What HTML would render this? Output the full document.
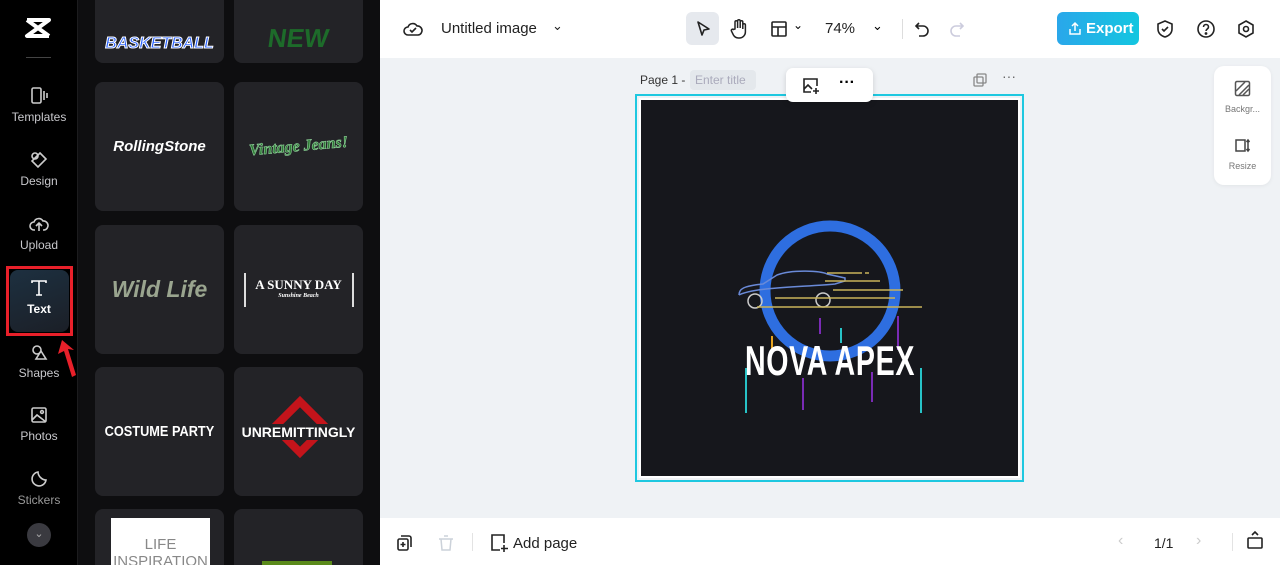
<!DOCTYPE html>
<html><head><meta charset="utf-8"><style>
*{margin:0;padding:0;box-sizing:border-box}
html,body{width:1280px;height:565px;overflow:hidden}
body{font-family:"Liberation Sans",sans-serif;background:#fff;position:relative}
.a{position:absolute}
.nav{left:0;top:0;width:78px;height:565px;background:#000;border-right:1px solid #1c1c1e}
.ni{position:absolute;left:0;width:78px;text-align:center;color:#c8c8cc;font-size:12px}
.ni svg{display:block;margin:0 auto 4px}
.panel{left:78px;top:0;width:302px;height:565px;background:#0e0e10;overflow:hidden}
.card{position:absolute;width:129px;height:129px;background:#232327;border-radius:8px;display:flex;align-items:center;justify-content:center;color:#fff;overflow:hidden}
.top{left:380px;top:0;width:900px;height:58px;background:#fff}
.bot{left:380px;top:518px;width:900px;height:47px;background:#fff}
.stage{left:380px;top:58px;width:900px;height:460px;background:#eff2f5;overflow:hidden}
</style></head><body>
<div class="a nav">
 <svg class="a" style="left:24px;top:16px" width="28" height="24" viewBox="0 0 28 24"><path d="M3 4h22L3 20h22M3 4l22 16" stroke="#fff" stroke-width="4" fill="none" stroke-linejoin="round"/></svg>
 <div class="a" style="left:26px;top:57px;width:25px;height:1px;background:#444"></div>
 <div class="ni" style="top:86px"><svg width="20" height="20" viewBox="0 0 20 20" fill="none" stroke="#ccc" stroke-width="1.6"><rect x="3" y="2" width="9" height="15" rx="1.5"/><path d="M15 5v9M18 7v5"/></svg>Templates</div>
 <div class="ni" style="top:150px"><svg width="20" height="20" viewBox="0 0 20 20" fill="none" stroke="#ccc" stroke-width="1.6"><circle cx="6" cy="6" r="3"/><path d="M11 3l6 6-8 8-6-6z"/></svg>Design</div>
 <div class="ni" style="top:214px"><svg width="20" height="20" viewBox="0 0 20 20" fill="none" stroke="#ccc" stroke-width="1.6"><path d="M6 16H5a4 4 0 010-8 5 5 0 019-1 4 4 0 011 9h-1M10 17v-7M7 12l3-3 3 3"/></svg>Upload</div>
 <div class="a" style="left:6px;top:266px;width:67px;height:70px;border:3px solid #e8202a"></div>
 <div class="a" style="left:10px;top:270px;width:59px;height:62px;border-radius:8px;background:linear-gradient(160deg,#1d3040,#1b1f27)"></div>
 <div class="ni" style="top:278px;color:#fff;font-weight:bold"><svg width="20" height="20" viewBox="0 0 20 20" fill="none" stroke="#fff" stroke-width="1.6"><path d="M3 5V3h14v2M10 3v14M7 17h6"/></svg>Text</div>
 <svg class="a" style="left:56px;top:338px" width="22" height="42" viewBox="0 0 22 42"><path d="M6 2l-4 14 6-3 8 26 4-2-8-26 6 1z" fill="#e8202a"/></svg>
 <div class="ni" style="top:342px"><svg width="20" height="20" viewBox="0 0 20 20" fill="none" stroke="#ccc" stroke-width="1.6"><circle cx="8" cy="8" r="4"/><path d="M12 9l5 8H7z"/></svg>Shapes</div>
 <div class="ni" style="top:405px"><svg width="20" height="20" viewBox="0 0 20 20" fill="none" stroke="#ccc" stroke-width="1.6"><rect x="3" y="3" width="14" height="14" rx="1.5"/><path d="M3 15l5-5 9 7"/><circle cx="13" cy="7" r="1.4"/></svg>Photos</div>
 <div class="ni" style="top:469px;color:#999"><svg width="20" height="20" viewBox="0 0 20 20" fill="none" stroke="#ccc" stroke-width="1.6"><path d="M17 11a7 7 0 11-8-8c0 4 4 8 8 8z"/></svg>Stickers</div>
 <div class="a" style="left:27px;top:523px;width:24px;height:24px;border-radius:50%;background:#3a3a40;color:#aaa;font-size:11px;text-align:center;line-height:22px">⌄</div>
</div>
<div class="a panel">
 <div class="card" style="left:17px;top:0;height:63px;border-radius:0 0 8px 8px"><div style="margin-top:24px;color:#2a63ff;font:italic bold 16px 'Liberation Sans';-webkit-text-stroke:1px #fff">BASKETBALL</div></div>
 <div class="card" style="left:156px;top:0;height:63px;border-radius:0 0 8px 8px"><div style="margin-top:14px;color:#1d6b2a;font:bold 26px 'Liberation Sans';transform:skewX(-8deg)">NEW</div></div>
 <div class="card" style="left:17px;top:82px"><span style="font:italic bold 15px 'Liberation Sans'">RollingStone</span></div>
 <div class="card" style="left:156px;top:82px"><span style="font:italic bold 16px 'Liberation Serif';color:#2f7a36;-webkit-text-stroke:0.6px #8fd09a;transform:rotate(-5deg)">Vintage Jeans!</span></div>
 <div class="card" style="left:17px;top:225px"><span style="font:italic bold 23px 'Liberation Sans';color:#9aa58f">Wild Life</span></div>
 <div class="card" style="left:156px;top:225px"><div style="width:110px;height:34px;border:2px solid #ddd;border-top:none;border-bottom:none;text-align:center;font:bold 13px 'Liberation Serif';padding-top:4px">A SUNNY DAY<div style="font-size:6px;font-style:italic">Sunshine Beach</div></div></div>
 <div class="card" style="left:17px;top:367px"><span style="font:bold 15px 'Liberation Sans Narrow','Liberation Sans';transform:scaleX(.85)">COSTUME PARTY</span></div>
 <div class="card" style="left:156px;top:367px"><div style="position:absolute;left:44px;top:38px;width:44px;height:44px;border:8px solid #c4141b;transform:rotate(45deg)"></div><span style="position:relative;font:bold 14px 'Liberation Sans';background:#232327">UNREMITTINGLY</span></div>
 <div class="card" style="left:17px;top:509px;height:56px;border-radius:8px 8px 0 0"><div style="position:absolute;left:16px;top:9px;width:99px;height:47px;background:#fff;color:#888;text-align:center;font-size:15px;padding-top:18px;overflow:hidden;line-height:17px">LIFE<br>INSPIRATION</div></div>
 <div class="card" style="left:156px;top:509px;height:56px;border-radius:8px 8px 0 0"><div style="position:absolute;left:28px;top:52px;width:70px;height:4px;background:#5a8a1a"></div></div>
 <div class="a" style="left:302px;top:258px;width:7px;height:52px;background:#2a2a2e;border-radius:0 6px 6px 0"></div>
</div>
<div class="a top">
 <svg class="a" style="left:23px;top:19px" width="20" height="20" viewBox="0 0 20 20" fill="none" stroke="#222" stroke-width="1.6"><path d="M6 16H5a4 4 0 010-8 5 5 0 019-1 4 4 0 011 9z"/><path d="M7 11l2 2 4-4"/></svg>
 <div class="a" style="left:61px;top:20px;font-size:15px;color:#222">Untitled image</div>
 <div class="a" style="left:172px;top:18px;font-size:13px;color:#222">⌄</div>
 <div class="a" style="left:306px;top:12px;width:33px;height:33px;background:#e6e9ee;border-radius:6px"></div>
 <svg class="a" style="left:314px;top:19px" width="18" height="20" viewBox="0 0 18 20"><path d="M4 3l11 7-5 1-2 5z" fill="none" stroke="#222" stroke-width="1.6" stroke-linejoin="round"/></svg>
 <svg class="a" style="left:349px;top:18px" width="20" height="22" viewBox="0 0 20 22" fill="none" stroke="#222" stroke-width="1.5"><path d="M6 11V4a1.3 1.3 0 012.6 0v6V3a1.3 1.3 0 012.6 0v7V4a1.3 1.3 0 012.6 0v7V7a1.3 1.3 0 012.6 0v7a6 6 0 01-6 6h-1a6 6 0 01-5-3l-2-4a1.3 1.3 0 012-1.5z"/></svg>
 <svg class="a" style="left:390px;top:20px" width="18" height="18" viewBox="0 0 18 18" fill="none" stroke="#222" stroke-width="1.6"><rect x="2" y="2" width="14" height="14" rx="1"/><path d="M2 7h14M8 7v9"/></svg>
 <div class="a" style="left:413px;top:18px;font-size:12px">⌄</div>
 <div class="a" style="left:445px;top:20px;font-size:15px;color:#222">74%</div>
 <div class="a" style="left:492px;top:18px;font-size:13px">⌄</div>
 <div class="a" style="left:522px;top:19px;width:1px;height:20px;background:#ddd"></div>
 <svg class="a" style="left:533px;top:20px" width="18" height="18" viewBox="0 0 18 18" fill="none" stroke="#222" stroke-width="1.6"><path d="M6 3L3 6l3 3M3 6h7a5 5 0 010 10H6"/></svg>
 <svg class="a" style="left:568px;top:20px" width="18" height="18" viewBox="0 0 18 18" fill="none" stroke="#ccd" stroke-width="1.6"><path d="M12 3l3 3-3 3M15 6H8a5 5 0 000 10h4"/></svg>
 <div class="a" style="left:677px;top:12px;width:82px;height:33px;border-radius:6px;background:linear-gradient(90deg,#2aa7ea,#13c6e0);color:#fff;font-weight:bold;font-size:15px;line-height:33px;padding-left:29px">Export</div>
 <svg class="a" style="left:688px;top:21px" width="14" height="15" viewBox="0 0 14 15" fill="none" stroke="#fff" stroke-width="1.5"><path d="M7 10V2M4 5l3-3 3 3M2 8v5h10V8"/></svg>
 <svg class="a" style="left:775px;top:19px" width="20" height="20" viewBox="0 0 20 20" fill="none" stroke="#222" stroke-width="1.6"><path d="M10 2l7 3v5c0 4-3 7-7 8-4-1-7-4-7-8V5z"/><path d="M7 10l2 2 4-4"/></svg>
 <svg class="a" style="left:816px;top:19px" width="20" height="20" viewBox="0 0 20 20" fill="none" stroke="#222" stroke-width="1.6"><circle cx="10" cy="10" r="8"/><path d="M7.5 8a2.5 2.5 0 115 0c0 2-2.5 2-2.5 4"/><circle cx="10" cy="14.5" r=".6" fill="#222"/></svg>
 <svg class="a" style="left:856px;top:19px" width="20" height="20" viewBox="0 0 20 20" fill="none" stroke="#222" stroke-width="1.6"><path d="M10 2l7 4v8l-7 4-7-4V6z"/><circle cx="10" cy="10" r="2.5"/></svg>
</div>
<div class="a stage">
 <div class="a" style="left:260px;top:15px;font-size:12px;color:#333">Page 1 -</div>
 <div class="a" style="left:310px;top:12px;width:66px;height:20px;background:#e4e8ec;border-radius:4px;color:#aab;font-size:12px;line-height:20px;padding-left:5px">Enter title</div>
 <svg class="a" style="left:592px;top:14px" width="16" height="16" viewBox="0 0 16 16" fill="none" stroke="#888" stroke-width="1.3"><rect x="5" y="2" width="9" height="9" rx="1"/><rect x="2" y="5" width="9" height="9" rx="1"/></svg>
 <div class="a" style="left:622px;top:10px;font-size:14px;color:#666">···</div>
 <div class="a" style="left:255px;top:36px;width:389px;height:388px;border:2px solid #1ec8e0"></div>
 <div class="a" style="left:259px;top:40px;width:381px;height:380px;border:2px solid #fff"></div>
 <div class="a" style="left:261px;top:42px;width:377px;height:376px;background:#16171c"></div>
 <div class="a" style="left:406px;top:10px;width:87px;height:34px;background:#fff;border-radius:7px;box-shadow:0 2px 6px rgba(0,0,0,.15)"></div>
 <svg class="a" style="left:422px;top:19px" width="18" height="18" viewBox="0 0 18 18" fill="none" stroke="#222" stroke-width="1.6"><path d="M9 2H2v13h7M15 9V2H9"/><path d="M2 12l4-4 4 4"/><path d="M14 11v6M11 14h6"/></svg>
 <div class="a" style="left:459px;top:16px;font-size:16px;font-weight:bold">···</div>
 <svg class="a" style="left:355px;top:160px" width="190" height="200" viewBox="0 0 190 200">
  <circle cx="95" cy="73" r="65" fill="none" stroke="#2e6ee0" stroke-width="11"/>
  <path d="M4 77c0-6 4-9 24-11l14-9c16-6 44-4 50-1l18 4v3l-10 3c-30 3-80 3-96 11" fill="none" stroke="#6a8ad8" stroke-width="1.5"/>
  <circle cx="20" cy="83" r="7" fill="none" stroke="#ccc" stroke-width="1.5"/>
  <circle cx="88" cy="82" r="7" fill="none" stroke="#ccc" stroke-width="1.5"/>
  <g stroke="#c9b45a" stroke-width="1.5"><path d="M92 55h35M90 63h55M98 72h70M40 80h120M22 89h165M130 55h4"/></g>
  <g stroke-width="2"><path d="M85 100v16M163 98v34M137 154v30" stroke="#7a2bb5"/><path d="M106 110v15M186 150v45M11 150v45" stroke="#27c3c7"/><path d="M68 160v32" stroke="#7a2bb5"/><path d="M37 118v14" stroke="#e6a31f"/></g>
 </svg>
 <div class="a" style="left:300px;top:279px;width:300px;text-align:center;white-space:nowrap;color:#fff;font:bold 42px 'Liberation Sans Narrow','Liberation Sans';line-height:48px;letter-spacing:1px;transform:scaleX(.68)">NOVA APEX</div>
 <div class="a" style="left:834px;top:8px;width:57px;height:119px;background:#fff;border-radius:10px;box-shadow:0 1px 4px rgba(0,0,0,.06)"></div>
 <svg class="a" style="left:854px;top:22px" width="17" height="17" viewBox="0 0 17 17" fill="none" stroke="#555" stroke-width="1.5"><rect x="1.5" y="1.5" width="14" height="14" rx="1.5"/><path d="M2 11l9-9M5 15l10-10M9 15l6-6"/></svg>
 <div class="a" style="left:834px;top:46px;width:57px;text-align:center;font-size:9px;color:#777">Backgr...</div>
 <svg class="a" style="left:853px;top:78px" width="18" height="18" viewBox="0 0 18 18" fill="none" stroke="#444" stroke-width="1.5"><path d="M3 4h9v11H3z"/><path d="M15 4v11M13.5 6L15 4l1.5 2M13.5 13l1.5 2 1.5-2"/></svg>
 <div class="a" style="left:834px;top:103px;width:57px;text-align:center;font-size:9px;color:#777">Resize</div>
</div>
<div class="a bot">
 <svg class="a" style="left:16px;top:16px" width="18" height="18" viewBox="0 0 18 18" fill="none" stroke="#222" stroke-width="1.6"><rect x="2" y="5" width="10" height="11" rx="1.5"/><path d="M5 2h8a2 2 0 012 2v9M7 8v5M4.5 10.5h5"/></svg>
 <svg class="a" style="left:58px;top:16px" width="16" height="18" viewBox="0 0 16 18" fill="none" stroke="#ccd2da" stroke-width="1.5"><path d="M3 5h10l-1 11H4zM1 5h14M6 2h4"/></svg>
 <div class="a" style="left:92px;top:15px;width:1px;height:18px;background:#e3e3e3"></div>
 <svg class="a" style="left:109px;top:15px" width="20" height="20" viewBox="0 0 20 20" fill="none" stroke="#222" stroke-width="1.6"><path d="M11 17H3V2h12v8"/><path d="M15 12v7M12 15.5h7"/></svg>
 <div class="a" style="left:133px;top:17px;font-size:15px;color:#222">Add page</div>
 <div class="a" style="left:738px;top:14px;font-size:16px;color:#ccc">‹</div>
 <div class="a" style="left:774px;top:17px;font-size:14px;color:#222">1/1</div>
 <div class="a" style="left:816px;top:14px;font-size:16px;color:#ccc">›</div>
 <div class="a" style="left:852px;top:15px;width:1px;height:18px;background:#e3e3e3"></div>
 <svg class="a" style="left:866px;top:12px" width="18" height="20" viewBox="0 0 18 20" fill="none" stroke="#222" stroke-width="1.6"><rect x="2" y="8" width="14" height="10" rx="1"/><path d="M6 5l3-3 3 3"/></svg>
</div>
</body></html>
